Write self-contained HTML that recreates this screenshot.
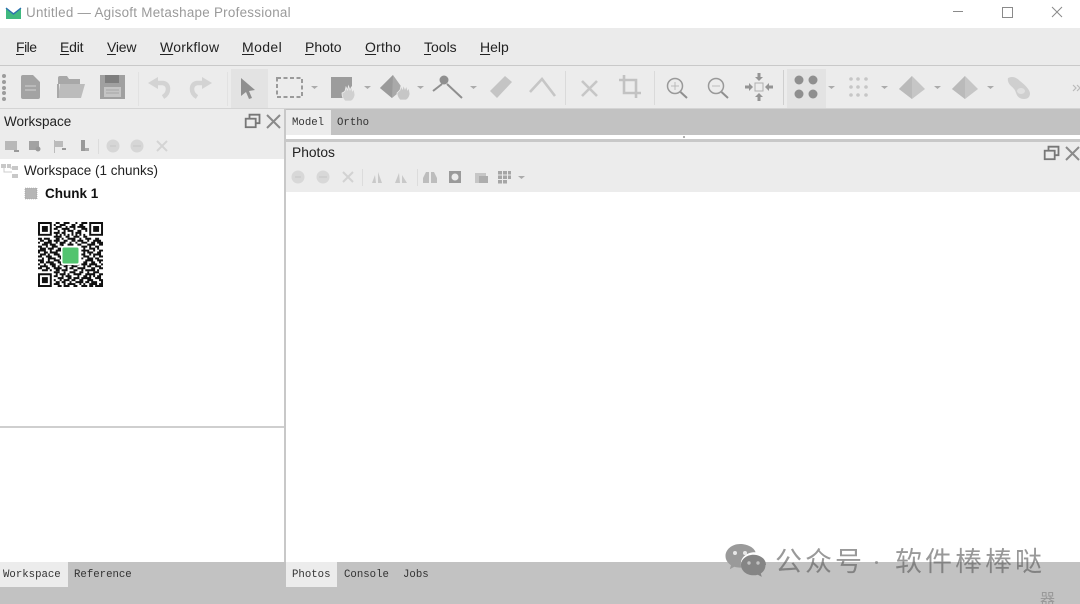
<!DOCTYPE html>
<html><head><meta charset="utf-8"><title>Untitled — Agisoft Metashape Professional</title>
<style>
html,body{margin:0;padding:0;background:#fff}
#p{position:relative;width:1080px;height:604px;overflow:hidden;background:#fff;font-family:"Liberation Sans","Noto Sans CJK SC",sans-serif;filter:blur(.35px)}
#p div{position:absolute}
.t{white-space:nowrap;line-height:18px;height:18px}
.m{font-size:14px;color:#222;top:38px}
.m u{text-underline-offset:2px}
.c{font-family:"Liberation Mono",monospace;font-size:10.7px;color:#333;white-space:nowrap;line-height:14px}
svg{position:absolute;left:0;top:0}
</style></head><body><div id="p">
<div style="left:0;top:28px;width:1080px;height:37px;background:#ebebeb"></div>
<div style="left:0;top:65px;width:1080px;height:1px;background:#c9c9c9"></div>
<div style="left:0;top:66px;width:1080px;height:42px;background:#ececec"></div>
<div style="left:231px;top:69px;width:37px;height:39px;background:#e3e3e3"></div>
<div style="left:787px;top:69px;width:39px;height:39px;background:#e3e3e3"></div>
<div style="left:0;top:108px;width:1080px;height:1px;background:#d4d4d4"></div>
<div style="left:0;top:109px;width:284px;height:50px;background:#ececec"></div>
<div style="left:284px;top:109px;width:2px;height:453px;background:#c8c8c8"></div>
<div style="left:286px;top:109px;width:794px;height:26px;background:#c2c2c2"></div>
<div style="left:286px;top:110px;width:45px;height:25px;background:#ececec"></div>
<div style="left:286px;top:139px;width:794px;height:3px;background:#c8c8c8"></div>
<div style="left:286px;top:142px;width:794px;height:50px;background:#ececec"></div>
<div style="left:0;top:426px;width:284px;height:2px;background:#cfcfcf"></div>
<div style="left:0;top:562px;width:1080px;height:42px;background:#c2c2c2"></div>
<div style="left:0;top:562px;width:68px;height:25px;background:#ececec"></div>
<div style="left:286px;top:562px;width:51px;height:25px;background:#ececec"></div>

<div class="t" style="left:26px;top:4px;font-size:13.4px;color:#9a9a9a;letter-spacing:.27px">Untitled — Agisoft Metashape Professional</div>
<div class="t m" style="left:16px;letter-spacing:-.5px"><u>F</u>ile</div>
<div class="t m" style="left:60px;letter-spacing:-.2px"><u>E</u>dit</div>
<div class="t m" style="left:107px;letter-spacing:-.2px"><u>V</u>iew</div>
<div class="t m" style="left:160px;letter-spacing:.25px"><u>W</u>orkflow</div>
<div class="t m" style="left:242px;letter-spacing:.4px"><u>M</u>odel</div>
<div class="t m" style="left:305px"><u>P</u>hoto</div>
<div class="t m" style="left:365px;letter-spacing:.2px"><u>O</u>rtho</div>
<div class="t m" style="left:424px"><u>T</u>ools</div>
<div class="t m" style="left:480px"><u>H</u>elp</div>

<div class="t" style="left:4px;top:113px;font-size:13.5px;color:#222">Workspace</div>
<div class="t" style="left:292px;top:144px;font-size:13.8px;color:#222">Photos</div>
<div class="t" style="left:24px;top:162px;font-size:13.5px;color:#222">Workspace (1 chunks)</div>
<div class="t" style="left:45px;top:185px;font-size:13.5px;font-weight:bold;color:#111">Chunk 1</div>

<div class="c" style="left:292px;top:116px">Model</div>
<div class="c" style="left:337px;top:116px">Ortho</div>
<div class="c" style="left:3px;top:568px">Workspace</div>
<div class="c" style="left:74px;top:568px">Reference</div>
<div class="c" style="left:292px;top:568px">Photos</div>
<div class="c" style="left:344px;top:568px">Console</div>
<div class="c" style="left:403px;top:568px">Jobs</div>

<svg width="1080" height="604" viewBox="0 0 1080 604">
<!-- app logo -->
<path d="M6 8l7.500 5L21 8v11H6z" fill="#3fb87f"/><path d="M6 8l7.500 6L21 8" fill="none" stroke="#2c6fb0" stroke-width="1.400"/>
<!-- window controls -->
<path d="M953 11.500h10" stroke="#8a8a8a" fill="none"/>
<rect x="1002.500" y="7.500" width="10" height="10" fill="none" stroke="#8a8a8a"/>
<path d="M1052 7l10 10M1062 7l-10 10" stroke="#8a8a8a" fill="none"/>
<!-- grip -->
<g fill="#9c9c9c"><circle cx="4" cy="76" r="2"/><circle cx="4" cy="82" r="2"/><circle cx="4" cy="88" r="2"/><circle cx="4" cy="93" r="2"/><circle cx="4" cy="99" r="2"/></g>
<!-- new -->
<path d="M21 77q0-2 2-2h10l7 7v15q0 2-2 2H23q-2 0-2-2z" fill="#a3a3a3"/><path d="M25 86h11M25 90h11" stroke="#c8c8c8" stroke-width="1.300"/>
<!-- open -->
<path d="M58 78q0-2 2-2h7l2 3h11v5H58z" fill="#a8a8a8"/><path d="M60 84h25l-4 14H58z" fill="#bcbcbc"/><path d="M58 84v14" stroke="#a8a8a8" stroke-width="2"/>
<!-- save -->
<rect x="100" y="75" width="25" height="24" fill="#a0a0a0"/><rect x="105" y="75" width="14" height="8" fill="#7e7e7e"/><rect x="104" y="87" width="17" height="10" fill="#c4c4c4"/><path d="M106 90h13M106 93h13" stroke="#a6a6a6"/>
<!-- undo redo -->
<path d="M148 83l10-6v12z" fill="#d3d3d3"/><path d="M156 83h7q5 1 5 6 0 5-5 8" fill="none" stroke="#d3d3d3" stroke-width="4.500"/>
<path d="M212 83l-10-6v12z" fill="#d3d3d3"/><path d="M204 83h-7q-5 1-5 6 0 5 5 8" fill="none" stroke="#d3d3d3" stroke-width="4.500"/>
<path d="M138.500 72v34M227.500 72v34" stroke="#e2e2e2"/>
<!-- arrow -->
<path d="M241 78l14 12-6 1 3 7-3 1-3-7-5 4z" fill="#8f8f8f"/>
<!-- rect select -->
<rect x="277" y="78" width="25" height="19" fill="none" stroke="#9a9a9a" stroke-width="2" stroke-dasharray="4 2.500"/>
<g fill="#ababab"><path d="M311 86h7l-3.500 3zM364 86h7l-3.500 3zM417 86h7l-3.500 3zM470 86h7l-3.500 3zM828 86h7l-3.500 3zM881 86h7l-3.500 3zM934 86h7l-3.500 3zM987 86h7l-3.500 3z"/></g>
<!-- area hand -->
<rect x="331" y="77" width="21" height="21" fill="#9c9c9c"/>
<path d="M345 101q-3-3-3-8l2-1 1-1 1-4 1.500 3 1-4 1.500 4 1.500-3 1 4 1.500-2 1 6q-1 5-4 6z" fill="#d0d0d0" stroke="#ececec" stroke-width=".8"/>
<!-- pyramid hand -->
<path d="M380 88l13-13 10 14-11 9z" fill="#a9a9a9"/><path d="M393 75l-1 23-12-10z" fill="#9a9a9a"/>
<path d="M400 100q-3-3-3-7l2-2 1-1 1-4 1.500 3 1-4 1.500 4 1.500-3 1 4 1.500-2 1 6q-1 5-4 6z" fill="#c6c6c6" stroke="#ececec" stroke-width=".8"/>
<!-- point line -->
<circle cx="444" cy="80" r="4.500" fill="#8f8f8f"/><path d="M433 91l9-7M447 84l15 14" stroke="#8f8f8f" stroke-width="2" fill="none"/>
<!-- ruler -->
<path d="M490 91l15-15 7 6-15 16z" fill="#c4c4c4"/>
<!-- angle -->
<path d="M530 92l12-13 13 17" fill="none" stroke="#c6c6c6" stroke-width="2.600"/>
<path d="M565.500 71v34M654.500 71v34" stroke="#dadada" fill="none"/>
<path d="M783.500 70v35" stroke="#cfcfcf" fill="none"/>
<!-- x -->
<path d="M582 81l15 15M597 81l-15 15" stroke="#c6c6c6" stroke-width="2.600" fill="none"/>
<!-- crop -->
<path d="M624 75v18h17M619 80h17v18" fill="none" stroke="#c2c2c2" stroke-width="2.600"/>
<!-- zoom -->
<circle cx="675" cy="86" r="7.500" fill="none" stroke="#999" stroke-width="1.500"/><path d="M680.500 92l6.500 6" stroke="#8f8f8f" stroke-width="2"/><path d="M671 86h8M675 82v8" stroke="#bbb"/>
<circle cx="716" cy="86" r="7.500" fill="none" stroke="#999" stroke-width="1.500"/><path d="M721.500 92l6.500 6" stroke="#8f8f8f" stroke-width="2"/><path d="M712 86h8" stroke="#bbb"/>
<!-- move -->
<rect x="755" y="83" width="8" height="8" fill="none" stroke="#b0b0b0"/>
<g fill="#949494"><path d="M759 81l-4-4h2.500v-4h3v4h2.500zM759 93l-4 4h2.500v4h3v-4h2.500zM753 87l-4-4v2.500h-4v3h4v2.500zM765 87l4-4v2.500h4v3h-4v2.500z"/></g>
<!-- big dots -->
<g fill="#8f8f8f"><circle cx="799" cy="80" r="4.500"/><circle cx="813" cy="80" r="4.500"/><circle cx="799" cy="94" r="4.500"/><circle cx="813" cy="94" r="4.500"/></g>
<!-- small dots -->
<g fill="#c6c6c6"><circle cx="851" cy="79" r="1.800"/><circle cx="858" cy="79" r="1.800"/><circle cx="866" cy="79" r="1.800"/><circle cx="851" cy="87" r="1.800"/><circle cx="858" cy="87" r="1.800"/><circle cx="866" cy="87" r="1.800"/><circle cx="851" cy="95" r="1.800"/><circle cx="858" cy="95" r="1.800"/><circle cx="866" cy="95" r="1.800"/></g>
<!-- pyramids -->
<path d="M899 89l13-13 13 13-13 10z" fill="#c6c6c6"/><path d="M912 76v23l-13-10z" fill="#bababa"/>
<path d="M952 89l13-13 13 13-13 10z" fill="#c6c6c6"/><path d="M965 76v23l-13-10z" fill="#bababa"/>
<!-- blob -->
<path d="M1008 78q6-3 12 3 9 7 10 12 0 6-6 6-6 0-8-6-1-4-5-7-4-4-3-8z" fill="#cfcfcf"/><ellipse cx="1021" cy="91" rx="4" ry="3" fill="#e0e0e0"/>
<path d="M1073 85l3 3-3 3M1077 85l3 3-3 3" fill="none" stroke="#bbb" stroke-width="1.200"/>
<!-- panel buttons -->
<g fill="none" stroke="#777" stroke-width="1.800"><rect x="245.700" y="118.700" width="10" height="8.500"/><path d="M249.500 118v-3.300h10v8.500h-3.500"/><path d="M267 115l13 13M280 115l-13 13" stroke="#8a8a8a" stroke-width="2"/>
<rect x="1044.700" y="150.700" width="10" height="8.500"/><path d="M1048.500 150v-3.300h10v8.500h-3.500"/><path d="M1066 147l13 13M1079 147l-13 13" stroke="#8a8a8a" stroke-width="2"/></g>
<!-- workspace toolbar -->
<g fill="#b0b0b0"><rect x="5" y="141" width="12" height="9" fill="#b8b8b8"/><path d="M14 150h5v2h-5z" fill="#999"/>
<rect x="29" y="141" width="10" height="9" fill="#a2a2a2"/><circle cx="38" cy="149" r="2.500" fill="#999"/>
<path d="M54 140h1v13h-1zM55 141h8v6h-8z" fill="#bbb"/><path d="M62 148h4v2h-4z" fill="#999"/>
<path d="M81 140h4v11h-4z" fill="#999"/><path d="M85 148h4v3h-4z" fill="#aaa"/></g>
<path d="M98.500 139v15" stroke="#dcdcdc"/>
<g fill="#d6d6d6"><circle cx="113" cy="146" r="6.500"/><circle cx="137" cy="146" r="6.500"/></g>
<path d="M133 146h8M110 146h6" stroke="#c6c6c6"/>
<path d="M157 141l10 10M167 141l-10 10" stroke="#d4d4d4" stroke-width="2"/>
<!-- tree icon -->
<g fill="#c8c8c8"><rect x="1" y="164" width="5" height="4"/><rect x="7" y="164" width="4" height="4"/><rect x="12" y="166" width="6" height="4"/><rect x="12" y="174" width="6" height="4"/></g>
<path d="M4 168v4h8M10 168h2" stroke="#ccc" fill="none"/>
<!-- chunk icon -->
<rect x="25" y="188" width="12" height="11" fill="#b6b6b6"/><rect x="25" y="188" width="12" height="11" fill="none" stroke="#999" stroke-width=".6" stroke-dasharray="1 1"/>
<!-- photos toolbar -->
<g fill="#d8d8d8"><circle cx="298" cy="177" r="6.500"/><circle cx="323" cy="177" r="6.500"/></g>
<path d="M319 177h8M295 177h6" stroke="#c6c6c6"/>
<path d="M343 172l10 10M353 172l-10 10" stroke="#d2d2d2" stroke-width="2"/>
<path d="M362.500 169v17M417.500 169v17" stroke="#dcdcdc"/>
<path d="M372 183l3-8 1 8zM378 183v-11l4 11z" fill="#c9c9c9"/>
<path d="M395 183l4-10 1 10zM402 183v-8l5 8z" fill="#c9c9c9"/>
<path d="M423 183v-5l3-6h3v11zM431 183v-11h3l3 6v5z" fill="#bdbdbd"/>
<rect x="449" y="171" width="12" height="12" fill="#9a9a9a"/><circle cx="455" cy="177" r="3.500" fill="#ececec"/>
<rect x="475" y="173" width="11" height="10" fill="#c6c6c6"/><rect x="479" y="176" width="9" height="7" fill="#adadad"/>
<g fill="#a6a6a6"><rect x="498" y="171" width="4" height="3.500"/><rect x="503" y="171" width="4" height="3.500"/><rect x="508" y="171" width="3" height="3.500"/><rect x="498" y="175.500" width="4" height="3.500"/><rect x="503" y="175.500" width="4" height="3.500"/><rect x="508" y="175.500" width="3" height="3.500"/><rect x="498" y="180" width="4" height="3.500"/><rect x="503" y="180" width="4" height="3.500"/></g>
<path d="M518 176h7l-3.500 3z" fill="#ababab"/>
<rect x="683" y="136" width="2" height="2" fill="#b0b0b0"/>

<!-- QR -->
<g transform="translate(38 222) scale(1.97)" fill="#111">
<path fill-rule="evenodd" d="M0 0h7v7H0zM1 1v5h5V1zM2 2h3v3H2zM26 0h7v7h-7zM27 1v5h5V1zM28 2h3v3h-3zM0 26h7v7H0zM1 27v5h5v-5zM2 28h3v3H2z"/>
<path d="M9 0h2v1H9zM13 0h3v1h-3zM19 0h1v1h-1zM22 0h3v1h-3zM8 1h1v1H8zM11 1h3v1h-3zM17 1h2v1h-2zM21 1h2v1h-2zM9 2h3v1H9zM14 2h1v1h-1zM16 2h3v1h-3zM20 2h4v1h-4zM8 3h2v1H8zM12 3h4v1h-4zM18 3h1v1h-1zM22 3h3v1h-3zM10 4h1v1h-1zM13 4h1v1h-1zM15 4h3v1h-3zM20 4h2v1h-2zM24 4h1v1h-1zM8 5h3v1H8zM12 5h2v1h-2zM17 5h1v1h-1zM19 5h3v1h-3zM9 6h1v1H9zM11 6h1v1h-1zM13 6h1v1h-1zM15 6h1v1h-1zM17 6h1v1h-1zM19 6h1v1h-1zM21 6h1v1h-1zM23 6h1v1h-1zM8 7h4v1H8zM14 7h2v1h-2zM18 7h3v1h-3zM23 7h2v1h-2z"/>
<path d="M0 8h2v1H0zM3 8h3v1H3zM9 8h2v1H9zM12 8h1v1h-1zM15 8h4v1h-4zM21 8h1v1h-1zM24 8h3v1h-3zM29 8h2v1h-2zM1 9h2v1H1zM5 9h2v1H5zM8 9h3v1H8zM13 9h2v1h-2zM17 9h2v1h-2zM20 9h3v1h-3zM25 9h1v1h-1zM28 9h4v1h-4zM0 10h1v1H0zM3 10h4v1H3zM9 10h1v1H9zM11 10h3v1h-3zM16 10h1v1h-1zM19 10h1v1h-1zM22 10h3v1h-3zM27 10h2v1h-2zM30 10h3v1h-3zM2 11h3v1H2zM6 11h3v1H6zM11 11h2v1h-2zM15 11h3v1h-3zM20 11h2v1h-2zM25 11h4v1h-4zM31 11h2v1h-2zM0 12h2v1H0zM4 12h1v1H4zM7 12h3v1H7zM12 12h1v1h-1zM22 12h3v1h-3zM26 12h1v1h-1zM29 12h2v1h-2zM1 13h3v1H1zM5 13h3v1H5zM10 13h2v1h-2zM23 13h1v1h-1zM26 13h3v1h-3zM30 13h1v1h-1zM0 14h4v1H0zM6 14h1v1H6zM9 14h3v1H9zM22 14h4v1h-4zM28 14h1v1h-1zM31 14h2v1h-2zM0 15h1v1H0zM3 15h2v1H3zM6 15h4v1H6zM23 15h1v1h-1zM25 15h3v1h-3zM30 15h2v1h-2zM1 16h3v1H1zM5 16h1v1H5zM8 16h3v1H8zM22 16h2v1h-2zM26 16h1v1h-1zM28 16h4v1h-4zM0 17h2v1H0zM4 17h3v1H4zM10 17h2v1h-2zM23 17h3v1h-3zM28 17h1v1h-1zM31 17h2v1h-2zM2 18h1v1H2zM5 18h4v1H5zM11 18h1v1h-1zM22 18h1v1h-1zM25 18h3v1h-3zM29 18h2v1h-2zM0 19h3v1H0zM5 19h1v1H5zM8 19h3v1H8zM24 19h4v1h-4zM30 19h3v1h-3zM1 20h2v1H1zM4 20h4v1H4zM10 20h3v1h-3zM15 20h1v1h-1zM18 20h3v1h-3zM23 20h2v1h-2zM27 20h2v1h-2zM31 20h1v1h-1zM0 21h1v1H0zM3 21h1v1H3zM6 21h3v1H6zM11 21h2v1h-2zM14 21h4v1h-4zM20 21h1v1h-1zM22 21h3v1h-3zM26 21h4v1h-4zM32 21h1v1h-1zM1 22h4v1H1zM7 22h2v1H7zM10 22h1v1h-1zM13 22h2v1h-2zM17 22h3v1h-3zM23 22h1v1h-1zM25 22h2v1h-2zM29 22h3v1h-3zM0 23h2v1H0zM4 23h2v1H4zM8 23h4v1H8zM14 23h1v1h-1zM16 23h2v1h-2zM20 23h4v1h-4zM27 23h2v1h-2zM31 23h2v1h-2zM2 24h3v1H2zM6 24h1v1H6zM9 24h2v1H9zM12 24h3v1h-3zM18 24h2v1h-2zM22 24h1v1h-1zM24 24h5v1h-5zM30 24h1v1h-1z"/>
<path d="M8 25h3v1H8zM13 25h1v1h-1zM16 25h3v1h-3zM21 25h2v1h-2zM25 25h1v1h-1zM28 25h3v1h-3zM9 26h1v1H9zM11 26h3v1h-3zM15 26h1v1h-1zM18 26h4v1h-4zM24 26h5v1h-5zM31 26h2v1h-2zM8 27h2v1H8zM12 27h1v1h-1zM14 27h3v1h-3zM20 27h1v1h-1zM23 27h2v1h-2zM26 27h1v1h-1zM28 27h1v1h-1zM30 27h2v1h-2zM10 28h3v1h-3zM15 28h2v1h-2zM18 28h3v1h-3zM22 28h5v1h-5zM29 28h3v1h-3zM8 29h1v1H8zM11 29h1v1h-1zM13 29h3v1h-3zM17 29h2v1h-2zM21 29h2v1h-2zM25 29h3v1h-3zM31 29h2v1h-2zM9 30h2v1H9zM12 30h2v1h-2zM16 30h1v1h-1zM19 30h4v1h-4zM24 30h2v1h-2zM27 30h3v1h-3zM32 30h1v1h-1zM8 31h3v1H8zM13 31h1v1h-1zM15 31h4v1h-4zM21 31h1v1h-1zM23 31h1v1h-1zM26 31h4v1h-4zM31 31h2v1h-2zM10 32h2v1h-2zM13 32h3v1h-3zM18 32h2v1h-2zM22 32h3v1h-3zM26 32h2v1h-2zM29 32h4v1h-4z"/>
</g>
<rect x="61" y="246" width="19" height="19" rx="2" fill="#fff"/>
<rect x="62.500" y="247.500" width="16" height="16" rx="1.500" fill="#52c46f"/>

<!-- watermark icon -->
<path d="M740 544c-8 0-14.500 5.500-14.500 12 0 3.800 2.200 7 5.500 9.200l-1.200 4 4.500-2.400c1.800.5 3.700.8 5.700.8h1.400c-.4-1.300-.6-2.500-.6-3.800 0-6.600 6.200-11.600 13.700-11.600h1.100C754 547.500 747.600 544 740 544z" fill="#9a9a9a"/>
<path d="M766 565c0-5.800-5.600-10.300-12.500-10.300S741 559.200 741 565s5.600 10.300 12.500 10.300c1.500 0 3-.2 4.300-.6l4 2.200-1-3.400c3-2 4.700-5 4.700-8.500z" fill="#858585"/>
<g fill="#e8e8e8"><circle cx="735" cy="553" r="2"/><circle cx="745" cy="553" r="2"/></g>
<g fill="#c2c2c2"><circle cx="749" cy="563" r="1.700"/><circle cx="758" cy="563" r="1.700"/></g>
</svg>
<div class="t" style="left:775px;top:543px;height:34px;line-height:34px;font-size:27px;letter-spacing:3px;color:rgba(90,90,90,.62);font-family:'Noto Sans CJK SC',sans-serif">公众号</div>
<div style="left:875px;top:561px;width:3px;height:3px;border-radius:50%;background:rgba(110,110,110,.6)"></div>
<div class="t" style="left:895px;top:543px;height:34px;line-height:34px;font-size:27px;letter-spacing:3px;color:rgba(90,90,90,.62);font-family:'Noto Sans CJK SC',sans-serif">软件棒棒哒</div>
<div class="t" style="left:1040px;top:590px;font-size:15px;color:#999;font-family:'Noto Sans CJK SC',sans-serif">器</div>
</div></body></html>
